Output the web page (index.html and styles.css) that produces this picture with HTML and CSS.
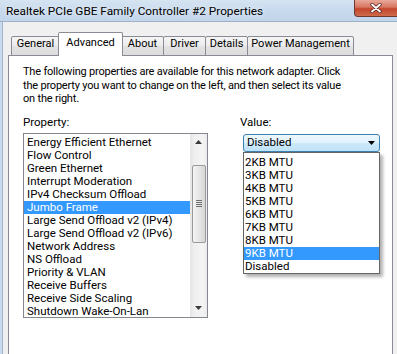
FILE: index.html
```html
<!DOCTYPE html>
<html>
<head>
<meta charset="utf-8">
<title>Properties</title>
<link rel="stylesheet" href="styles.css">
</head>
<body>
<div class="window">
  <div class="titlebar">
    <span class="title">Realtek PCIe GBE Family Controller #2 Properties</span>
    <div class="close">
      <svg width="12" height="10" viewBox="0 0 12 10">
        <path d="M2 1.5 L10 8.5 M10 1.5 L2 8.5" stroke="#5a2a24" stroke-width="3.4" stroke-linecap="round"/>
        <path d="M2 1.5 L10 8.5 M10 1.5 L2 8.5" stroke="#ffffff" stroke-width="1.8" stroke-linecap="round"/>
      </svg>
    </div>
  </div>
  <div class="client">
    <div class="tabs">
      <div class="tab t-general">General</div>
      <div class="tab active t-advanced">Advanced</div>
      <div class="tab t-about">About</div>
      <div class="tab t-driver">Driver</div>
      <div class="tab t-details">Details</div>
      <div class="tab t-power">Power Management</div>
    </div>
    <div class="panel">
      <p class="desc">The following properties are available for this network adapter. Click<br>the property you want to change on the left, and then select its value<br>on the right.</p>
      <div class="columns">
        <div class="col-left">
          <div class="label">Property:</div>
          <div class="listbox">
            <ul class="items">
              <li>Energy Efficient Ethernet</li>
              <li>Flow Control</li>
              <li>Green Ethernet</li>
              <li>Interrupt Moderation</li>
              <li>IPv4 Checksum Offload</li>
              <li class="sel">Jumbo Frame</li>
              <li>Large Send Offload v2 (IPv4)</li>
              <li>Large Send Offload v2 (IPv6)</li>
              <li>Network Address</li>
              <li>NS Offload</li>
              <li>Priority &amp; VLAN</li>
              <li>Receive Buffers</li>
              <li>Receive Side Scaling</li>
              <li>Shutdown Wake-On-Lan</li>
            </ul>
            <div class="vscroll">
              <div class="sb-btn">
                <svg width="7" height="4" viewBox="0 0 7 4"><polygon points="3.5,0 7,4 0,4" fill="#3a3a3a"/></svg>
              </div>
              <div class="sb-track">
                <div class="sb-thumb">
                  <div class="grip"><span></span><span></span><span></span><span></span></div>
                </div>
              </div>
              <div class="sb-btn">
                <svg width="7" height="4" viewBox="0 0 7 4"><polygon points="0,0 7,0 3.5,4" fill="#3a3a3a"/></svg>
              </div>
            </div>
          </div>
        </div>
        <div class="col-right">
          <div class="label">Value:</div>
          <div class="combo-wrap">
            <div class="combo">
              <span>Disabled</span>
              <svg width="7" height="4" viewBox="0 0 7 4"><polygon points="0,0 7,0 3.5,4" fill="#000"/></svg>
            </div>
            <ul class="dropdown">
              <li>2KB MTU</li>
              <li>3KB MTU</li>
              <li>4KB MTU</li>
              <li>5KB MTU</li>
              <li>6KB MTU</li>
              <li>7KB MTU</li>
              <li>8KB MTU</li>
              <li class="sel">9KB MTU</li>
              <li>Disabled</li>
            </ul>
          </div>
        </div>
      </div>
    </div>
  </div>
</div>
</body>
</html>
```
FILE: styles.css
```css
html, body {
  margin: 0;
  padding: 0;
}
body {
  width: 397px;
  height: 354px;
  overflow: hidden;
  font-family: Roboto, "Liberation Sans", sans-serif;
  font-size: 11.5px;
  color: #000;
  background: #c9dbee;
}
.window {
  width: 397px;
  height: 354px;
  overflow: hidden;
}
.titlebar {
  height: 21px;
  display: flex;
  justify-content: space-between;
  align-items: flex-start;
  background: linear-gradient(#d6e4f2, #c5d8ec 60%, #c2d5ea);
  border-bottom: 1px solid #9cb0c6;
}
.title {
  padding-left: 6px;
  line-height: 22px;
  font-size: 11.8px;
  text-shadow: 0 0 5px rgba(255, 255, 255, 0.9);
}
.close {
  box-sizing: border-box;
  width: 46px;
  height: 17px;
  margin-right: -3px;
  border: 1px solid #6b3a33;
  border-top: none;
  border-radius: 0 0 0 4px;
  background: linear-gradient(#e9a899, #d77560 45%, #c4452b 55%, #cf6a4c);
  display: flex;
  align-items: center;
  justify-content: center;
  padding-right: 3px;
}
.client {
  margin-left: 2px;
  border-left: 1px solid #a3b4c8;
  background: #f0f0f0;
  padding: 10px 4px 0 5px;
  height: 340px;
}
.tabs {
  display: flex;
  align-items: flex-end;
  height: 24px;
  margin-bottom: -1px;
  padding-left: 3px;
  position: relative;
  z-index: 1;
}
.tab {
  box-sizing: border-box;
  height: 20px;
  border: 1px solid #898c95;
  border-radius: 2px 2px 0 0;
  background: linear-gradient(#f5f5f5, #ebebeb 50%, #e2e2e2 51%, #dcdcdc);
  text-align: center;
  font-size: 11px;
  line-height: 14px;
  white-space: nowrap;
}
.tab.active {
  height: 24px;
  border-bottom: none;
  background: #fff;
  padding-top: 3px;
  position: relative;
  z-index: 2;
}
.t-general { width: 49px; }
.t-advanced { width: 65px; margin-left: -2px; }
.t-about { width: 43px; margin-left: -2px; }
.t-driver { width: 43px; margin-left: -1px; }
.t-details { width: 43px; margin-left: -1px; }
.t-power { width: 107px; margin-left: -1px; }
.panel {
  background: #fff;
  border: 1px solid #898c95;
  height: 330px;
  padding: 9px 0 0 14px;
}
.desc {
  margin: 0;
  width: 360px;
  white-space: nowrap;
  font-size: 11px;
  letter-spacing: -0.2px;
  line-height: 13.5px;
}
.columns {
  display: flex;
  margin-top: 10px;
}
.label {
  line-height: 13px;
}
.col-left {
  width: 185px;
}
.col-left .label {
  margin-bottom: 4px;
}
.listbox {
  box-sizing: border-box;
  width: 185px;
  height: 185px;
  border: 1px solid #828790;
  display: flex;
}
.items {
  flex: 1;
  list-style: none;
  margin: 0;
  padding: 2px 0 0 0;
  overflow: hidden;
}
.items li {
  height: 13px;
  line-height: 13px;
  padding-left: 3px;
  white-space: nowrap;
}
.sel {
  background: #3399ff;
  color: #fff;
}
.vscroll {
  width: 17px;
  display: flex;
  flex-direction: column;
  background: linear-gradient(90deg, #e4e4e4, #efefef 25%, #f4f4f4 75%, #ebebeb);
}
.sb-btn {
  height: 17px;
  display: flex;
  align-items: center;
  justify-content: center;
}
.sb-track {
  flex: 1;
}
.sb-thumb {
  box-sizing: border-box;
  margin: 14px 1px 0 2px;
  height: 78px;
  border: 1px solid #9a9a9a;
  border-radius: 2px;
  background: linear-gradient(90deg, #f3f3f3, #e6e6e6 50%, #d6d6d6);
  display: flex;
  align-items: center;
  justify-content: center;
}
.grip {
  display: flex;
  flex-direction: column;
  gap: 1px;
}
.grip span {
  display: block;
  width: 6px;
  height: 1px;
  background: #6e6e6e;
}
.col-right {
  margin-left: 32px;
}
.combo-wrap {
  position: relative;
  margin: 5px 0 0 3px;
  width: 137px;
}
.combo {
  box-sizing: border-box;
  width: 137px;
  height: 18px;
  border: 1px solid #3c7fb1;
  border-radius: 3px;
  background: linear-gradient(#edf7fd, #dff1fc 50%, #cce9fa 51%, #bfe2f8);
  display: flex;
  align-items: center;
  justify-content: space-between;
  padding: 0 4px 0 3px;
  line-height: 13px;
}
.dropdown {
  position: absolute;
  top: 100%;
  left: 0;
  box-sizing: border-box;
  width: 137px;
  margin: 0;
  padding: 3px 0 0 0;
  list-style: none;
  background: #fff;
  border: 1px solid #646464;
  box-shadow: 3px 3px 3px rgba(0, 0, 0, 0.3);
}
.dropdown li {
  height: 13px;
  line-height: 13px;
  padding-left: 1px;
  white-space: nowrap;
}
```
